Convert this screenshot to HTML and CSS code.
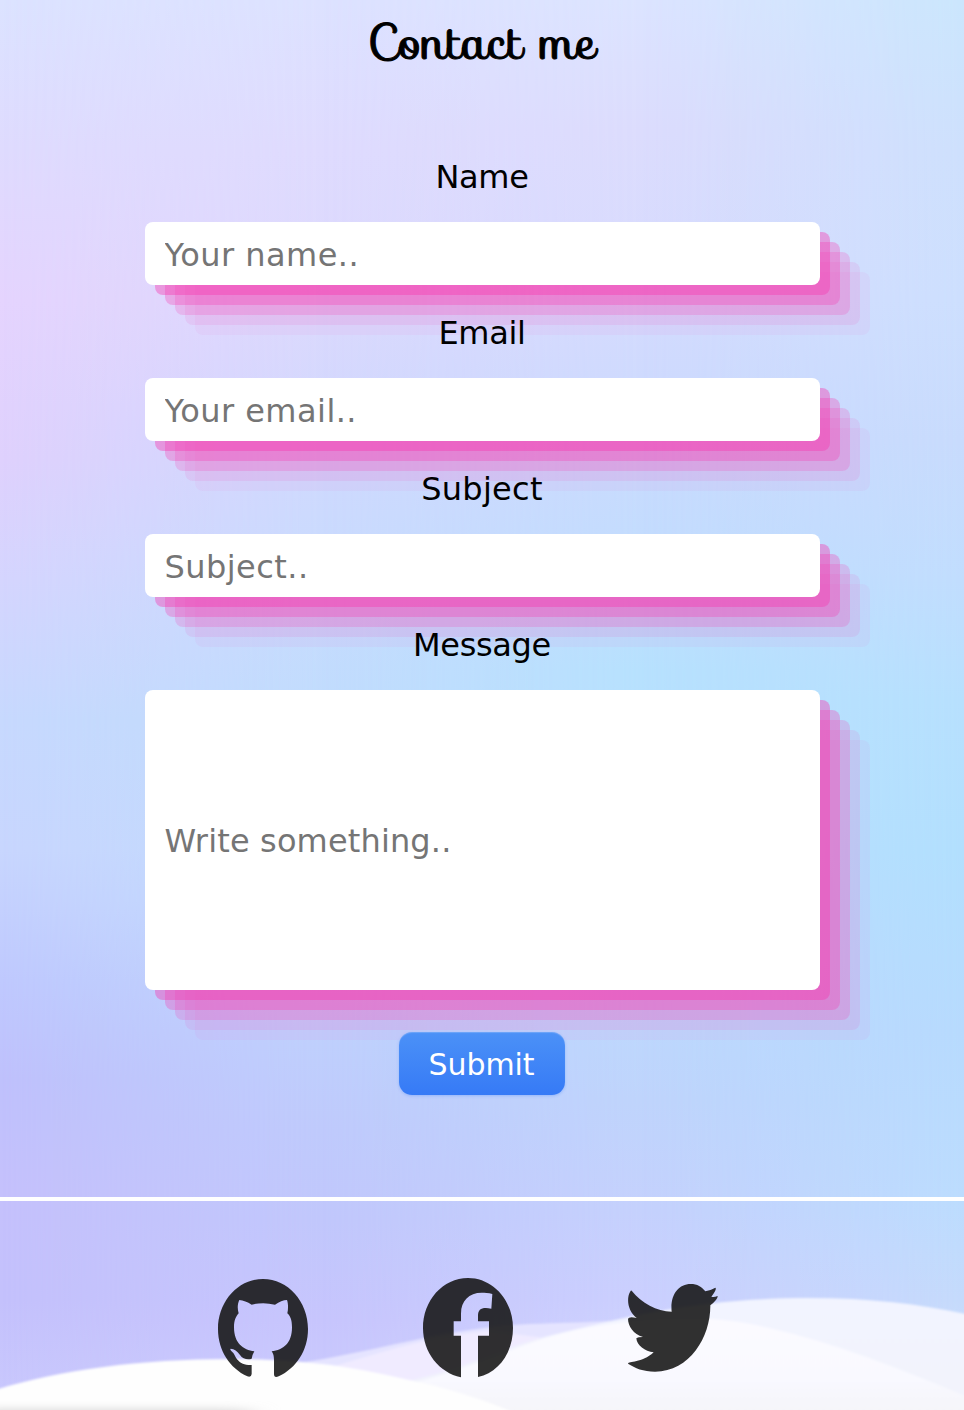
FILE: index.html
```html
<!DOCTYPE html>
<html lang="en">
<head>
<meta charset="utf-8">
<title>Contact me</title>
<link rel="stylesheet" href="styles.css">
</head>
<body>
<div class="page">
  <div class="sky" aria-hidden="true">
    <div class="band band-a"></div>
    <div class="band band-b"></div>
    <div class="band band-c"></div>
    <div class="band band-d"></div>
    <svg class="hills" viewBox="0 0 964 130">
      <defs>
        <linearGradient id="mist" x1="0" y1="0" x2="0" y2="1"><stop offset="0" stop-color="#f2f4ff"/><stop offset="1" stop-color="#f2f3fb"/></linearGradient>
        <linearGradient id="snow" x1="0" y1="0" x2="0" y2="1"><stop offset="0" stop-color="#fbfaff"/><stop offset=".6" stop-color="#f9f9ff"/><stop offset="1" stop-color="#f4f4f8"/></linearGradient>
        <filter id="soft"><feGaussianBlur stdDeviation="1.2"/></filter>
        <filter id="wide" x="-20%" y="-60%" width="140%" height="220%"><feGaussianBlur stdDeviation="14 5"/></filter>
      </defs>
      <g filter="url(#soft)">
        <path d="M290 84 C370 74 440 48 530 44 C590 42 610 42 680 36 V140 H290Z" fill="#e5e4ff"/>
        <path d="M335 86 C390 70 430 56 490 51 L560 60 V140 H335Z" fill="#f0ebff"/>
        <path d="M400 103 C470 88 510 64 560 53 C630 36 700 18 810 18 C870 18 920 24 970 35 V140 H400Z" fill="url(#mist)"/>
        <path d="M400 106 C480 88 520 60 590 47 C640 38 700 35 740 42 C810 54 880 80 970 118 V140 H400Z" fill="url(#snow)"/>
        <path d="M-5 110 C60 90 140 79 230 79 C300 79 350 86 400 98 C450 108 490 122 520 135 H-5Z" fill="#fefefe"/>
      </g>
      <path d="M-30 130 H250 V145 H-30Z" fill="#d4d4d4" filter="url(#wide)"/>
    </svg>
  </div>

  <main class="contact">
    <h1 class="title">Contact me</h1>
    <form class="form">
      <label class="label" for="name">Name</label>
      <input class="field" id="name" type="text" placeholder="Your name..">
      <label class="label" for="email">Email</label>
      <input class="field" id="email" type="text" placeholder="Your email..">
      <label class="label label-subject" for="subject">Subject</label>
      <input class="field" id="subject" type="text" placeholder="Subject..">
      <label class="label" for="message">Message</label>
      <input class="field field-message" id="message" type="text" placeholder="Write something..">
      <button class="submit" type="button">Submit</button>
    </form>
  </main>

  <footer class="footer">
    <svg class="icon" viewBox="54 54 270 300" role="img" aria-label="GitHub"><path d="M189 57C264 57 324 125 324 207C324 272 288 325 236 349Q222 355 222 342V300Q222 283 215 274C250 270 276 250 276 202C276 180 271 168 262 160C265 148 265 130 261 120C250 120 238 126 225 134Q189 125 155 134C142 126 130 121 118 120C112 132 112 148 116 160C107 170 102 182 102 202C102 250 130 270 163 274Q157 284 155 296C145 300 128 298 120 285Q108 267 92 266Q88 268 100 279C108 290 113 316 155 315V342Q154 353 142 349C90 325 54 272 54 207C54 125 114 57 189 57Z"/></svg>
    <svg class="icon" viewBox="54 54 270 300" role="img" aria-label="Facebook"><path d="M168 352C103 338 54 278 54 204C54 121 114 54 189 54S324 121 324 204C324 278 280 338 219 351V227H252V184H219V168C219 146 232 141 259 146L262 102C250 98 240 98 230 98C192 98 168 122 168 161V184H146V227H168Z"/></svg>
    <svg class="icon" viewBox="54 54 270 300" role="img" aria-label="Twitter"><path d="M65 92C95 130 140 153 185 155C180 105 205 72 242 72C262 72 275 80 286 94Q300 92 316 83Q322 88 304 110Q312 112 323 108Q324 118 301 136C302 230 240 335 135 335C100 335 75 324 54 311C56 303 95 310 131 277C105 275 80 255 79 235Q84 231 99 231C70 222 54 198 54 176Q58 168 80 174C55 155 48 118 60 96Q63 91 65 92Z"/></svg>
  </footer>
</div>
</body>
</html>
```
FILE: styles.css
```css
* { box-sizing: border-box; }

body {
  margin: 0;
  font-family: "DejaVu Sans", Verdana, sans-serif;
  color: #000;
}

.page {
  position: relative;
  height: 1410px;
  overflow: hidden;
  isolation: isolate;
}

/* Sky: vertical colour bands that fade into each other from left to right */
.sky, .band { position: absolute; inset: 0; }
.sky { z-index: -1; }

.band-a { background: linear-gradient(#dce3ff 0, #dfdbfe 150px, #e5d4fe 300px, #dfd1fd 460px, #d5d5fe 580px, #c7d9fe 720px, #c8d6fe 850px, #bfc9fe 980px, #bfc1fc 1080px, #c5c1fc 1190px, #c4c1fc 1300px, #cac9fd 1410px); }
.band-b {
  background: linear-gradient(#dde2ff 0, #dfdbfe 150px, #dcd9fd 300px, #d2d8fe 420px, #c9dbfe 560px, #c0dcfd 720px, #c2dbfe 900px, #bfd0fd 1030px, #bfcafc 1130px, #c1c7fc 1220px, #c7c5fd 1320px, #cbcbfd 1410px);
  mask-image: linear-gradient(90deg, transparent 0, #000 320px);
}
.band-c {
  background: linear-gradient(#dce4ff 0, #dcdcfd 130px, #d8dbfe 260px, #cddafe 400px, #c3dcfe 540px, #b7e1fe 670px, #b8e0fe 800px, #bcdafe 960px, #bfd4fc 1100px, #c5d1fd 1210px, #cbcffe 1300px, #d5d9ff 1410px);
  mask-image: linear-gradient(90deg, transparent 320px, #000 640px);
}
.band-d {
  background: linear-gradient(#cbe6fd 0, #cee0fd 150px, #cddffe 300px, #c8dbfd 440px, #c1ddfe 580px, #b7e0fe 700px, #b2dffe 850px, #b7dafe 1030px, #bcdcfe 1200px, #c5dafc 1300px, #d5e0fb 1410px);
  mask-image: linear-gradient(90deg, transparent 640px, #000 960px);
}

.hills {
  position: absolute;
  left: 0;
  bottom: 0;
  width: 964px;
  height: 130px;
}

.contact {
  height: 1201px;
  padding-top: 10px;
  border-bottom: 4px solid #fff;
}

.title {
  margin: 0 0 85px;
  font: 400 48px/64px "Sofia", cursive;
  text-align: center;
  -webkit-text-stroke: 1px #000;
}

.form {
  display: flex;
  flex-direction: column;
  align-items: center;
}

.label {
  height: 63px;
  font-size: 32px;
  line-height: 37px;
  letter-spacing: -0.35px;
}
.label-subject { letter-spacing: 0.3px; }

.field {
  width: 675px;
  height: 63px;
  margin: 0 0 30px;
  padding: 2px 20px 0;
  border: 0;
  border-radius: 8px;
  background: #fff;
  font: 32px "DejaVu Sans", Verdana, sans-serif;
  letter-spacing: 0.45px;
  box-shadow:
    10px 10px rgba(248, 56, 176, .4),
    20px 20px rgba(248, 56, 176, .3),
    30px 30px rgba(248, 56, 176, .2),
    40px 40px rgba(248, 56, 176, .1),
    50px 50px rgba(248, 56, 176, .05);
}
.field::placeholder { color: #757575; opacity: 1; }

.field-message { height: 300px; margin-bottom: 42px; letter-spacing: 0.15px; }

.submit {
  width: 166px;
  height: 63px;
  margin-right: 1px;
  padding: 2px 0 0;
  border: 0;
  border-radius: 13px;
  background: linear-gradient(#4b91f7, #367af6);
  color: #fff;
  font: 30px "DejaVu Sans", Verdana, sans-serif;
  letter-spacing: -0.1px;
  box-shadow:
    0 1px 3px rgba(54, 122, 246, .3),
    inset 0 1px 1px rgba(255, 255, 255, .2);
}

.footer {
  display: flex;
  gap: 115px;
  padding: 77px 0 0 218px;
}

.icon {
  width: 90px;
  height: 100px;
  fill: rgba(22, 22, 22, .89);
}
```
